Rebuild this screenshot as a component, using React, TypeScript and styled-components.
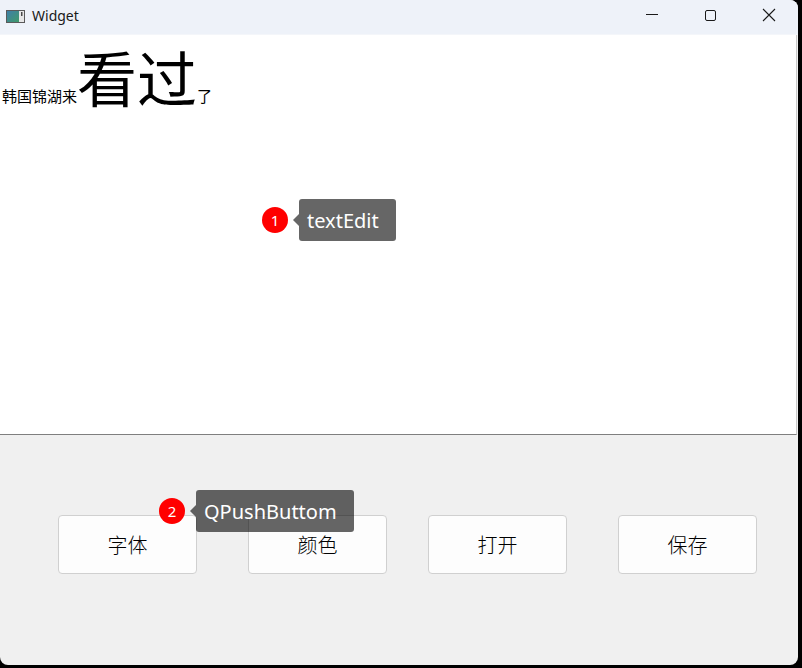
import styled, { createGlobalStyle } from "styled-components";

const GlobalStyle = createGlobalStyle`
  html, body {
    margin: 0;
    padding: 0;
    background: #000;
  }
`;

const cjk = `"Noto Sans CJK SC", "Noto Sans", sans-serif`;

type Note = { n: number; label: string; x: number; y: number };

const notes: Note[] = [
  { n: 1, label: "textEdit", x: 262, y: 199 },
  { n: 2, label: "QPushButtom", x: 159, y: 490 },
];

const buttons = [
  { text: "字体", gap: 58 },
  { text: "颜色", gap: 51 },
  { text: "打开", gap: 41 },
  { text: "保存", gap: 51 },
];

export default function App() {
  return (
    <>
      <GlobalStyle />
      <Window>
        <TitleBar>
          <AppIcon />
          <Title>Widget</Title>
          <Controls>
            <Control>
              <svg width="46" height="34" viewBox="0 0 46 34">
                <line x1="6" y1="14.5" x2="18" y2="14.5" stroke="#1a1a1a" strokeWidth="1" />
              </svg>
            </Control>
            <Control>
              <svg width="58" height="34" viewBox="0 0 58 34">
                <rect x="19.5" y="10.5" width="10" height="10" rx="1.5" fill="none" stroke="#1a1a1a" strokeWidth="1" />
              </svg>
            </Control>
            <Control>
              <svg width="54" height="34" viewBox="0 0 54 34">
                <path d="M19 9 L31 21 M31 9 L19 21" stroke="#1a1a1a" strokeWidth="1.1" />
              </svg>
            </Control>
          </Controls>
        </TitleBar>
        <Editor>
          <Line>
            韩国锦湖来<Big>看过</Big>了
          </Line>
        </Editor>
        <ButtonBar>
          {buttons.map((b) => (
            <PushButton key={b.text} $gap={b.gap}>
              {b.text}
            </PushButton>
          ))}
        </ButtonBar>
        {notes.map((note) => (
          <Annotation key={note.n} $x={note.x} $y={note.y}>
            <Badge>{note.n}</Badge>
            <Pointer />
            <Tip>{note.label}</Tip>
          </Annotation>
        ))}
      </Window>
    </>
  );
}

function AppIcon() {
  return (
    <IconBox width="20" height="14" viewBox="0 0 20 14">
      <defs>
        <linearGradient id="ig" x1="0" y1="0" x2="1" y2="1">
          <stop offset="0" stopColor="#3f7fa8" />
          <stop offset="1" stopColor="#3f9a6a" />
        </linearGradient>
      </defs>
      <rect x="0.5" y="0.5" width="18" height="12" fill="#e6e6e6" stroke="#5a5a5a" />
      <rect x="1" y="1" width="12" height="11" fill="url(#ig)" />
      <rect x="15" y="2" width="1.5" height="4" fill="#4a4a4a" />
    </IconBox>
  );
}

const Window = styled.div`
  position: relative;
  width: 798px;
  height: 665px;
  background: #f0f0f0;
  border-radius: 0 8px 8px 8px;
  overflow: hidden;
  display: flex;
  flex-direction: column;
`;

const TitleBar = styled.div`
  height: 34px;
  flex: none;
  display: flex;
  align-items: center;
  background: #eef2f9;
  border-bottom: 1px solid #f4f6fa;
`;

const IconBox = styled.svg`
  margin-left: 6px;
  margin-top: -1px;
  flex: none;
`;

const Title = styled.span`
  margin-left: 6px;
  margin-top: -3px;
  font-family: "Noto Sans", sans-serif;
  font-size: 14px;
  color: #1a1a1a;
`;

const Controls = styled.div`
  margin-left: auto;
  display: flex;
  height: 34px;
`;

const Control = styled.div`
  display: flex;
  svg {
    display: block;
  }
`;

const Editor = styled.div`
  height: 400px;
  flex: none;
  background: #fff;
  border-bottom: 1px solid #7f7f7f;
  border-right: 1px solid #c9c9c9;
  margin-right: 1px;
  padding: 11px 2px 0;
  box-sizing: border-box;
`;

const Line = styled.div`
  font-family: ${cjk};
  font-size: 15px;
  line-height: 1;
  color: #000;
`;

const Big = styled.span`
  font-size: 60px;
`;

const ButtonBar = styled.div`
  flex: 1;
  display: flex;
  align-items: flex-start;
  padding-top: 80px;
`;

const PushButton = styled.button<{ $gap: number }>`
  margin-left: ${(p) => p.$gap}px;
  width: 139px;
  height: 59px;
  box-sizing: border-box;
  background: #fdfdfd;
  border: 1px solid #d0d0d0;
  border-radius: 4px;
  font-family: ${cjk};
  font-size: 20px;
  font-weight: 300;
  color: #000;
  padding: 0;
`;

const Annotation = styled.div<{ $x: number; $y: number }>`
  position: absolute;
  left: ${(p) => p.$x}px;
  top: ${(p) => p.$y}px;
  display: flex;
  align-items: center;
`;

const Badge = styled.div`
  width: 26px;
  height: 26px;
  border-radius: 50%;
  background: #ff0000;
  color: #fff;
  font-family: "Noto Sans", sans-serif;
  font-size: 15px;
  display: flex;
  align-items: center;
  justify-content: center;
`;

const Pointer = styled.div`
  margin-left: 5px;
  width: 0;
  height: 0;
  border-top: 6px solid transparent;
  border-bottom: 6px solid transparent;
  border-right: 6px solid rgba(0, 0, 0, 0.6);
`;

const Tip = styled.div`
  height: 42px;
  box-sizing: border-box;
  padding: 0 17px 0 8px;
  display: flex;
  align-items: center;
  background: rgba(0, 0, 0, 0.6);
  border-radius: 3px;
  color: #fff;
  font-family: "Noto Sans", sans-serif;
  font-size: 20px;
`;
